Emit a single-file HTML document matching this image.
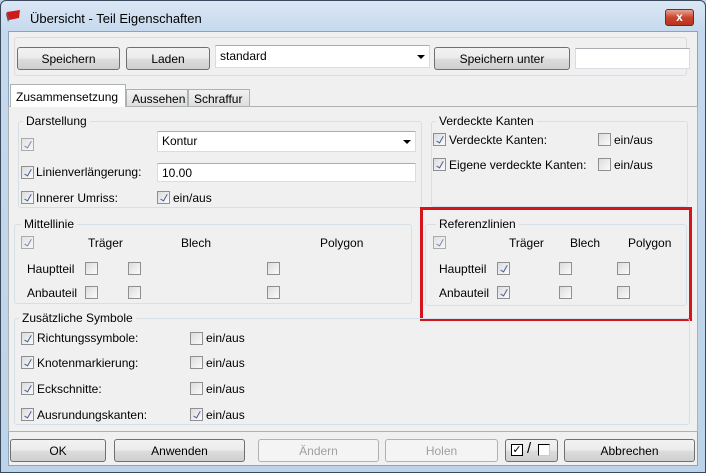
<!DOCTYPE html>
<html><head><meta charset="utf-8"><style>
*{box-sizing:border-box;margin:0;padding:0}
body{width:706px;height:473px;overflow:hidden;background:#bcd4ec;font-family:"Liberation Sans",sans-serif;font-size:12px;color:#000;position:relative}
.a{position:absolute}
.win{left:0;top:0;width:706px;height:473px;border:1px solid #3a4a5c;border-radius:6px 6px 0 0;background:linear-gradient(#dbe7f4,#c5d9ee 30px,#bcd3ea)}
.client{left:8px;top:31px;width:690px;height:435px;background:#f0f0f0;border:1px solid #8ea3ba}
.btn{position:absolute;border:1px solid #707070;border-radius:3px;background:linear-gradient(#f2f2f2 0,#ebebeb 50%,#dddddd 51%,#cfcfcf 100%);text-align:center;line-height:22px}
.dis{border-color:#adb2b5;background:#f4f4f4;color:#a0a0a0}
.tb{position:absolute;background:#fff;border:1px solid #d8dde3;border-top-color:#abadb3;padding-left:4px;line-height:18px}
.grp{position:absolute;border:1px solid #d5dfe5;border-radius:3px}
.gl{position:absolute;background:#f0f0f0;padding:0 3px;line-height:14px}
.cb{position:absolute;width:13px;height:13px;border:1px solid #8f8f8f;background:linear-gradient(135deg,#dcdcdc,#fbfbfb)}
.cb.c::after{content:"";position:absolute;left:4px;top:1px;width:3px;height:7px;border:solid #4a5f97;border-width:0 1.5px 1.5px 0;transform:rotate(30deg)}
.t{position:absolute;line-height:14px;white-space:nowrap}
.arr{position:absolute;width:0;height:0;border-left:4px solid transparent;border-right:4px solid transparent;border-top:4px solid #000}
</style></head><body>
<div class="a win"></div>
<svg class="a" style="left:5px;top:9px" width="18" height="14"><polygon points="2,3 15,1 14,9 4,11" fill="#d01a1a"/><polygon points="2,3 4,11 3,13 1,5" fill="#555"/></svg>
<div class="t" style="left:30px;top:12px;font-size:13px">Übersicht - Teil Eigenschaften</div>
<div class="a" style="left:665px;top:9px;width:29px;height:17px;border:1px solid #6b2a22;border-radius:3px;background:linear-gradient(#e8a493,#c9452f 50%,#b8321d);color:#fff;text-align:center;font-weight:bold;line-height:15px;font-size:12px">x</div>
<div class="a client"></div>
<div class="grp" style="left:14px;top:37px;width:673px;height:39px;border-color:#dcdcdc"></div>
<div class="btn" style="left:17px;top:47px;width:103px;height:23px">Speichern</div>
<div class="btn" style="left:126px;top:47px;width:84px;height:23px">Laden</div>
<div class="tb" style="left:215px;top:45px;width:215px;height:23px;line-height:21px">standard</div>
<div class="arr" style="left:417px;top:55px"></div>
<div class="btn" style="left:434px;top:47px;width:136px;height:23px">Speichern unter</div>
<div class="tb" style="left:575px;top:48px;width:115px;height:21px"></div>
<div class="a" style="left:8px;top:106px;width:690px;height:326px;border:1px solid #adb2b5;background:#f0f0f0"></div>
<div class="a" style="left:10px;top:84px;width:116px;height:23px;border:1px solid #adb2b5;border-bottom:none;background:#fff;padding:5px 0 0 5px;font-size:12px">Zusammensetzung</div>
<div class="a" style="left:126px;top:89px;width:62px;height:18px;border:1px solid #adb2b5;background:linear-gradient(#f2f2f2,#dedede);padding:2px 0 0 5px;font-size:12px">Aussehen</div>
<div class="a" style="left:188px;top:89px;width:62px;height:18px;border:1px solid #adb2b5;background:linear-gradient(#f2f2f2,#dedede);padding:2px 0 0 5px;font-size:12px">Schraffur</div>
<div class="grp" style="left:18px;top:121px;width:404px;height:87px"></div>
<div class="gl" style="left:23px;top:114px">Darstellung</div>
<div class="cb c" style="left:21px;top:138px;opacity:.7"></div>
<div class="tb" style="left:157px;top:131px;width:259px;height:21px">Kontur</div>
<div class="arr" style="left:403px;top:140px"></div>
<div class="cb c" style="left:21px;top:166px"></div><div class="t" style="left:36px;top:165px">Linienverlängerung:</div>
<div class="tb" style="left:157px;top:163px;width:259px;height:19px">10.00</div>
<div class="cb c" style="left:21px;top:191px"></div><div class="t" style="left:36px;top:191px">Innerer Umriss:</div>
<div class="cb c" style="left:157px;top:191px"></div><div class="t" style="left:173px;top:191px">ein/aus</div>
<div class="grp" style="left:431px;top:121px;width:257px;height:86px"></div>
<div class="gl" style="left:436px;top:114px">Verdeckte Kanten</div>
<div class="cb c" style="left:433px;top:133px"></div><div class="t" style="left:449px;top:133px">Verdeckte Kanten:</div>
<div class="cb" style="left:598px;top:133px"></div><div class="t" style="left:614px;top:133px">ein/aus</div>
<div class="cb c" style="left:433px;top:158px"></div><div class="t" style="left:449px;top:158px">Eigene verdeckte Kanten:</div>
<div class="cb" style="left:598px;top:158px"></div><div class="t" style="left:614px;top:158px">ein/aus</div>
<div class="grp" style="left:14px;top:224px;width:398px;height:80px"></div>
<div class="gl" style="left:21px;top:217px">Mittellinie</div>
<div class="cb c" style="left:21px;top:236px;opacity:.7"></div>
<div class="t" style="left:88px;top:236px">Träger</div><div class="t" style="left:181px;top:236px">Blech</div><div class="t" style="left:320px;top:236px">Polygon</div>
<div class="t" style="left:27px;top:262px">Hauptteil</div>
<div class="cb" style="left:85px;top:262px"></div><div class="cb" style="left:128px;top:262px"></div><div class="cb" style="left:267px;top:262px"></div>
<div class="t" style="left:27px;top:286px">Anbauteil</div>
<div class="cb" style="left:85px;top:286px"></div><div class="cb" style="left:128px;top:286px"></div><div class="cb" style="left:267px;top:286px"></div>
<div class="grp" style="left:425px;top:224px;width:262px;height:82px"></div>
<div class="gl" style="left:436px;top:217px">Referenzlinien</div>
<div class="cb c" style="left:433px;top:236px;opacity:.7"></div>
<div class="t" style="left:509px;top:236px">Träger</div><div class="t" style="left:570px;top:236px">Blech</div><div class="t" style="left:628px;top:236px">Polygon</div>
<div class="t" style="left:439px;top:262px">Hauptteil</div>
<div class="cb c" style="left:497px;top:262px"></div><div class="cb" style="left:559px;top:262px"></div><div class="cb" style="left:617px;top:262px"></div>
<div class="t" style="left:439px;top:286px">Anbauteil</div>
<div class="cb c" style="left:497px;top:286px"></div><div class="cb" style="left:559px;top:286px"></div><div class="cb" style="left:617px;top:286px"></div>
<div class="a" style="left:420px;top:207px;width:272px;height:114px;border:3px solid #d4161c"></div>
<div class="grp" style="left:14px;top:318px;width:676px;height:107px"></div>
<div class="gl" style="left:19px;top:311px">Zusätzliche Symbole</div>
<div class="cb c" style="left:21px;top:332px"></div><div class="t" style="left:37px;top:331px">Richtungssymbole:</div>
<div class="cb" style="left:190px;top:332px"></div><div class="t" style="left:206px;top:331px">ein/aus</div>
<div class="cb c" style="left:21px;top:356px"></div><div class="t" style="left:37px;top:356px">Knotenmarkierung:</div>
<div class="cb" style="left:190px;top:356px"></div><div class="t" style="left:206px;top:356px">ein/aus</div>
<div class="cb c" style="left:21px;top:382px"></div><div class="t" style="left:37px;top:382px">Eckschnitte:</div>
<div class="cb" style="left:190px;top:382px"></div><div class="t" style="left:206px;top:382px">ein/aus</div>
<div class="cb c" style="left:21px;top:408px"></div><div class="t" style="left:37px;top:408px">Ausrundungskanten:</div>
<div class="cb c" style="left:190px;top:408px"></div><div class="t" style="left:206px;top:408px">ein/aus</div>
<div class="btn" style="left:10px;top:439px;width:96px;height:23px">OK</div>
<div class="btn" style="left:114px;top:439px;width:131px;height:23px">Anwenden</div>
<div class="btn dis" style="left:258px;top:439px;width:121px;height:23px">Ändern</div>
<div class="btn dis" style="left:385px;top:439px;width:113px;height:23px">Holen</div>
<div class="btn" style="left:505px;top:439px;width:53px;height:23px"></div>
<div class="a" style="left:511px;top:444px;width:12px;height:12px;border:1px solid #000;background:#fff;font-size:11px;line-height:10px;text-align:center">✓</div>
<div class="t" style="left:527px;top:442px;font-size:15px">/</div>
<div class="a" style="left:538px;top:444px;width:12px;height:12px;border:1px solid #000;border-right-color:#ccc;border-bottom-color:#ccc;background:#fff"></div>
<div class="btn" style="left:564px;top:439px;width:131px;height:23px">Abbrechen</div>
</body></html>
